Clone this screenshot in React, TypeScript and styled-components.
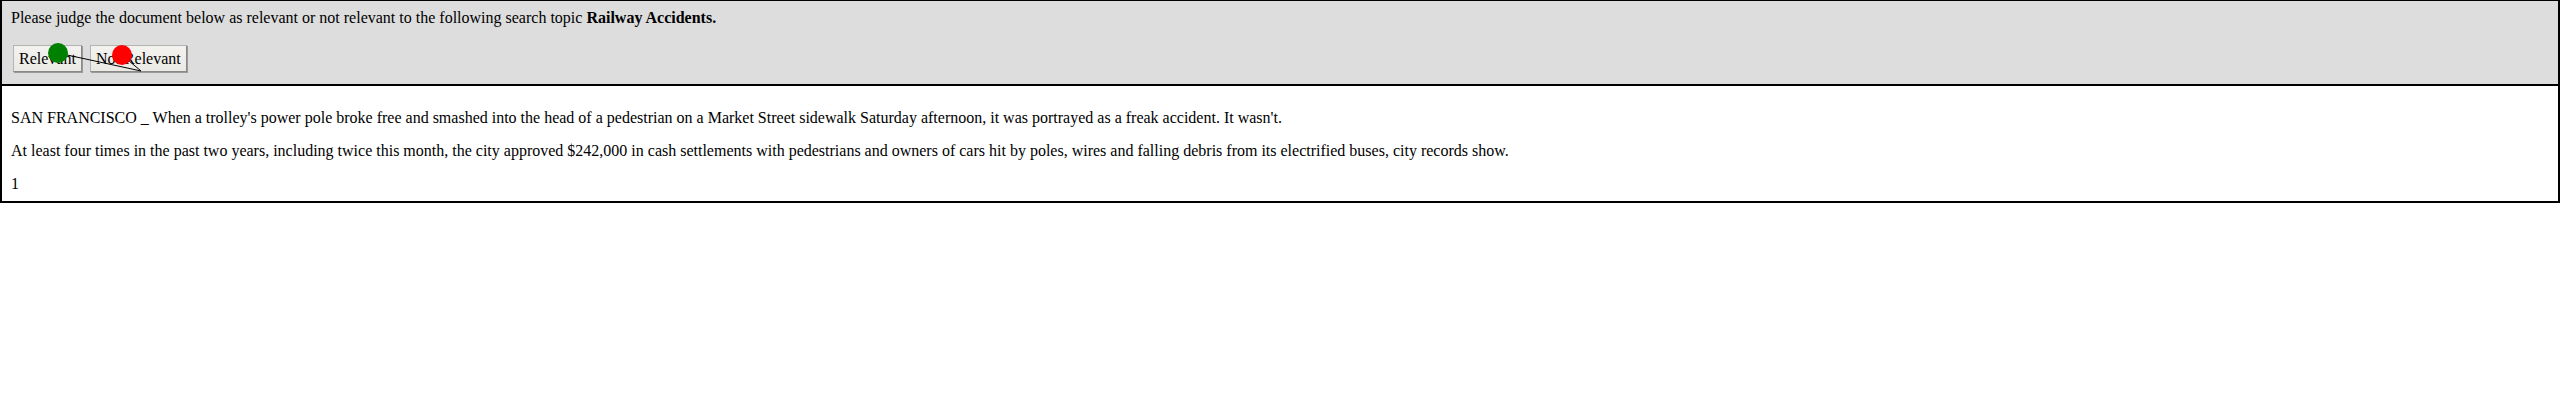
import React from "react"
import styled, { createGlobalStyle } from "styled-components"

const GlobalStyle = createGlobalStyle`
  body {
    margin: 0;
    background: white;
    font-family: "Liberation Serif", "Times New Roman", serif;
    font-size: 16px;
    color: black;
  }
`

// mouse trail recorded over the judge buttons
const trail = {
  green: { x: 56, y: 52 },
  turn: { x: 139, y: 70 },
  red: { x: 120, y: 54 },
}

export default function App() {
  return (
    <>
      <GlobalStyle />
      <Frame>
        <Header>
          <Prompt>
            Please judge the document below as relevant or not relevant to the following search topic{" "}
            <b>Railway Accidents.</b>
          </Prompt>
          <ButtonRow>
            <JudgeButton>Relevant</JudgeButton>
            <JudgeButton>Not Relevant</JudgeButton>
          </ButtonRow>
        </Header>
        <Document>
          <Para>
            SAN FRANCISCO _ When a trolley's power pole broke free and smashed into the head of a pedestrian on a
            Market Street sidewalk Saturday afternoon, it was portrayed as a freak accident. It wasn't.
          </Para>
          <Para>
            At least four times in the past two years, including twice this month, the city approved $242,000 in
            cash settlements with pedestrians and owners of cars hit by poles, wires and falling debris from its
            electrified buses, city records show.
          </Para>
          <Para>1</Para>
        </Document>
        <Trail width="200" height="90" viewBox="0 0 200 90">
          <polyline
            points={`${trail.green.x},${trail.green.y} ${trail.turn.x},${trail.turn.y} ${trail.red.x},${trail.red.y}`}
            fill="none"
            stroke="black"
            strokeWidth="1"
          />
          <circle cx={trail.green.x} cy={trail.green.y} r="10" fill="#008000" />
          <circle cx={trail.red.x} cy={trail.red.y} r="10" fill="#ff0000" />
        </Trail>
      </Frame>
    </>
  )
}

const Frame = styled.div`
  position: relative;
  border: 2px solid black;
  border-top-width: 1px;
  width: 2560px;
  box-sizing: border-box;
`

const Header = styled.div`
  background: #dddddd;
  border-bottom: 2px solid black;
  padding: 8px 9px 12px;
`

const Prompt = styled.div`
  line-height: 18px;
`

const ButtonRow = styled.div`
  display: flex;
  gap: 8px;
  margin-top: 18px;
  padding-left: 2px;
`

const JudgeButton = styled.button`
  font-family: "Liberation Serif", "Times New Roman", serif;
  font-size: 16px;
  color: black;
  background: linear-gradient(#f4f2ee, #ebe9e4);
  border: 1px solid #b4b4b4;
  border-right-color: #8a8a8a;
  border-bottom-color: #8a8a8a;
  box-shadow: 1px 1px 0 #9a9a9a;
  padding: 0 5px;
  height: 27px;
`

const Trail = styled.svg`
  position: absolute;
  left: 0;
  top: 0;
  overflow: visible;
  pointer-events: none;
`

const Document = styled.div`
  padding: 7px 9px 9px;
`

const Para = styled.p`
  margin: 16px 0 0;
  line-height: 17px;
`
